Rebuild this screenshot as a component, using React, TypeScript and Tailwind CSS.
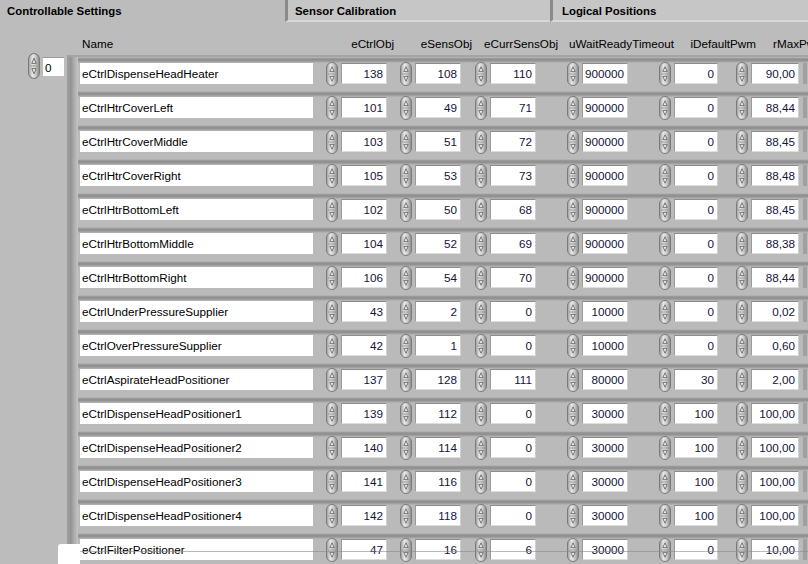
import React from "react";

type Row = {
  name: string;
  ctrl: string;
  sens: string;
  curr: string;
  wait: string;
  pwm: string;
  max: string;
};

const rows: Row[] = [
  { name: "eCtrlDispenseHeadHeater", ctrl: "138", sens: "108", curr: "110", wait: "900000", pwm: "0", max: "90,00" },
  { name: "eCtrlHtrCoverLeft", ctrl: "101", sens: "49", curr: "71", wait: "900000", pwm: "0", max: "88,44" },
  { name: "eCtrlHtrCoverMiddle", ctrl: "103", sens: "51", curr: "72", wait: "900000", pwm: "0", max: "88,45" },
  { name: "eCtrlHtrCoverRight", ctrl: "105", sens: "53", curr: "73", wait: "900000", pwm: "0", max: "88,48" },
  { name: "eCtrlHtrBottomLeft", ctrl: "102", sens: "50", curr: "68", wait: "900000", pwm: "0", max: "88,45" },
  { name: "eCtrlHtrBottomMiddle", ctrl: "104", sens: "52", curr: "69", wait: "900000", pwm: "0", max: "88,38" },
  { name: "eCtrlHtrBottomRight", ctrl: "106", sens: "54", curr: "70", wait: "900000", pwm: "0", max: "88,44" },
  { name: "eCtrlUnderPressureSupplier", ctrl: "43", sens: "2", curr: "0", wait: "10000", pwm: "0", max: "0,02" },
  { name: "eCtrlOverPressureSupplier", ctrl: "42", sens: "1", curr: "0", wait: "10000", pwm: "0", max: "0,60" },
  { name: "eCtrlAspirateHeadPositioner", ctrl: "137", sens: "128", curr: "111", wait: "80000", pwm: "30", max: "2,00" },
  { name: "eCtrlDispenseHeadPositioner1", ctrl: "139", sens: "112", curr: "0", wait: "30000", pwm: "100", max: "100,00" },
  { name: "eCtrlDispenseHeadPositioner2", ctrl: "140", sens: "114", curr: "0", wait: "30000", pwm: "100", max: "100,00" },
  { name: "eCtrlDispenseHeadPositioner3", ctrl: "141", sens: "116", curr: "0", wait: "30000", pwm: "100", max: "100,00" },
  { name: "eCtrlDispenseHeadPositioner4", ctrl: "142", sens: "118", curr: "0", wait: "30000", pwm: "100", max: "100,00" },
  { name: "eCtrlFilterPositioner", ctrl: "47", sens: "16", curr: "6", wait: "30000", pwm: "0", max: "10,00" },
];

function Spinner({ h = 24 }: { h?: number }) {
  return (
    <svg width="12" height={h} viewBox="0 0 12 24" preserveAspectRatio="none" className="shrink-0">
      <defs>
        <linearGradient id="spin-g" x1="0" y1="0" x2="1" y2="0">
          <stop offset="0" stopColor="#9a9a9a" />
          <stop offset="0.35" stopColor="#e6e6e6" />
          <stop offset="0.6" stopColor="#d2d2d2" />
          <stop offset="1" stopColor="#868686" />
        </linearGradient>
      </defs>
      <rect x="0.5" y="0.5" width="11" height="23" rx="5.5" fill="url(#spin-g)" stroke="#7a7a7a" />
      <line x1="2" y1="12" x2="10" y2="12" stroke="#9a9a9a" />
      <path d="M3.8 9.6 L6 4.8 L8.2 9.6 Z" fill="#e8e8e8" stroke="#5c5c5c" strokeWidth="0.8" />
      <path d="M3.8 14.4 L6 19.2 L8.2 14.4 Z" fill="#e8e8e8" stroke="#5c5c5c" strokeWidth="0.8" />
    </svg>
  );
}

function Num({ value, w, gap }: { value: string; w: string; gap: string }) {
  return (
    <div className={`flex items-center h-[21px] ${gap}`}>
      <Spinner />
      <div
        className={`${w} ml-[3px] h-[21px] bg-white border-t border-l border-t-[#8c8c8c] border-l-[#9a9a9a] border-b border-r border-b-[#dedede] border-r-[#d0d0d0] pr-[3px] text-right leading-[19px] text-[#141438]`}
      >
        {value}
      </div>
    </div>
  );
}

export default function App() {
  return (
    <div className="relative w-[808px] h-[564px] overflow-hidden bg-[#bcbcbc] text-[11.7px] text-black font-['Liberation_Sans',Arial,sans-serif]">
      {/* Tabs */}
      <div className="flex h-[22px]">
        <div className="w-[285px] pl-[7px] pt-[3px] font-bold text-[11.4px] bg-[#bcbcbc]">
          Controllable Settings
        </div>
        <div className="w-[265px] pl-[7px] pt-[3px] font-bold text-[11.4px] bg-[#c6c6c6] border-l-[3px] border-l-[#8a8a8a] border-b-[2px] border-b-[#d8d8d8]">
          Sensor Calibration
        </div>
        <div className="flex-1 pl-[9px] pt-[3px] font-bold text-[11.4px] bg-[#c6c6c6] border-l-[3px] border-l-[#8a8a8a] border-b-[2px] border-b-[#d8d8d8]">
          Logical Positions
        </div>
      </div>

      <div className="flex">
        {/* Index control */}
        <div className="w-[67px] shrink-0 pt-[31px] pl-[28px]">
          <div className="flex items-center">
            <Spinner h={26} />
            <div className="ml-[3px] w-[21px] h-[19px] bg-white pl-[2px] leading-[19px] border-t border-t-[#9a9a9a]">
              0
            </div>
          </div>
        </div>

        {/* Array */}
        <div className="flex-1 min-w-0">
          <div className="flex h-[33px] items-center pt-[10px] whitespace-nowrap">
            <div className="w-[15px] shrink-0" />
            <div className="w-[218px] shrink-0">Name</div>
            <div className="w-[94px] shrink-0 text-right">eCtrlObj</div>
            <div className="w-[78px] shrink-0 text-right">eSensObj</div>
            <div className="w-[86px] shrink-0 text-right">eCurrSensObj</div>
            <div className="w-[116px] shrink-0 text-right">uWaitReadyTimeout</div>
            <div className="w-[82px] shrink-0 text-right">iDefaultPwm</div>
            <div className="shrink-0 pl-[17px]">rMaxPwm</div>
          </div>

          <div className="border-l-[3px] border-l-[#9c9c9c] border-t-[2px] border-t-[#a4a4a4]">
            {rows.map((r) => (
              <div key={r.name} className="flex h-[34px]">
                <div className="w-[8px] shrink-0 bg-[linear-gradient(to_right,#8e8e8e,#a6a6a6_40%,#c4c4c4)]" />
                <div className="flex-1 flex items-start pt-[6px] bg-[linear-gradient(to_bottom,#c6c6c6_0px,#9e9e9e_1px,#8c8c8c_3px,#a8a8a8_5px,#bababa_6px,#bababa_100%)]">
                  <div className="ml-[2px] w-[233px] h-[21px] bg-white pl-[2px] leading-[21px] whitespace-nowrap overflow-hidden">
                    {r.name}
                  </div>
                  <Num value={r.ctrl} w="w-[46px]" gap="ml-[13px]" />
                  <Num value={r.sens} w="w-[46px]" gap="ml-[13px]" />
                  <Num value={r.curr} w="w-[46px]" gap="ml-[14px]" />
                  <Num value={r.wait} w="w-[46px]" gap="ml-[31px]" />
                  <Num value={r.pwm} w="w-[44px]" gap="ml-[31px]" />
                  <Num value={r.max} w="w-[48px]" gap="ml-[18px]" />
                  <div className="ml-[4px] w-[4px] h-[21px] bg-[#a0a0a0]" />
                </div>
              </div>
            ))}
          </div>
        </div>
      </div>

      {/* overlay artifacts at bottom */}
      <div className="absolute left-[58px] top-[544px] w-[22px] h-[20px] bg-white rounded-tl-[3px]" />
      <div className="absolute left-[80px] top-[551px] w-[728px] h-px bg-[#8a8a8a]/60" />
    </div>
  );
}
